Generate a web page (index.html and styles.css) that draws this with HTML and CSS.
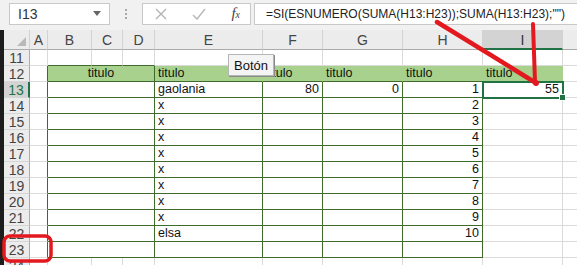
FILE: index.html
```html
<!DOCTYPE html>
<html lang="es">
<head>
<meta charset="UTF-8" />
<title>Hoja de cálculo</title>
<link rel="stylesheet" href="styles.css">
</head>
<body>
<div class="app">
  <div class="fbar">
    <div class="namebox">
      <span>I13</span>
      <svg class="dd" width="8" height="5" viewBox="0 0 8 5"><path d="M0 0h8L4 5z" fill="#666"/></svg>
    </div>
    <div class="grip"><i></i><i></i><i></i></div>
    <div class="fbtns">
      <svg width="12" height="12" viewBox="0 0 12 12"><path d="M1 1l10 10M11 1L1 11" stroke="#b4b4b4" stroke-width="1.4" fill="none"/></svg>
      <svg width="14" height="12" viewBox="0 0 14 12"><path d="M1 7l4 4 8-10" stroke="#bdbdbd" stroke-width="1.6" fill="none"/></svg>
      <span class="fx">f<small>x</small></span>
    </div>
    <div class="formula">=SI(ESNUMERO(SUMA(H13:H23));SUMA(H13:H23);"")</div>
  </div>

  <div class="sheet">
    <div class="grid">
      <!-- column headers -->
      <div class="ch corner"><svg width="9" height="9" viewBox="0 0 9 9"><path d="M9 0v9H0z" fill="#b9b9b9"/></svg></div>
      <div class="ch">A</div>
      <div class="ch">B</div>
      <div class="ch">C</div>
      <div class="ch">D</div>
      <div class="ch">E</div>
      <div class="ch">F</div>
      <div class="ch">G</div>
      <div class="ch">H</div>
      <div class="ch on">I</div>
      <div class="ch"></div>

      <!-- 11 -->
      <div class="rh">11</div>
      <div class="c"></div>
      <div class="c tb"></div><div class="c tb"></div><div class="c tb"></div>
      <div class="c"></div><div class="c"></div><div class="c"></div><div class="c"></div><div class="c"></div>
      <div class="c"></div>

      <!-- 12 -->
      <div class="rh">12</div>
      <div class="c tr"></div>
      <div class="c hd box mid span3">titulo</div>
      <div class="c hd">titulo</div>
      <div class="c hd">titulo</div>
      <div class="c hd">titulo</div>
      <div class="c hd">titulo</div>
      <div class="c hd last">titulo</div>
      <div class="c"></div>

      <!-- 13 -->
      <div class="rh on">13</div>
      <div class="c tr"></div>
      <div class="c t span3"></div>
      <div class="c t">gaolania</div>
      <div class="c t num">80</div>
      <div class="c t num">0</div>
      <div class="c t num">1</div>
      <div class="c num">55</div>
      <div class="c"></div>

      <!-- 14-21 -->
      <div class="rh">14</div><div class="c tr"></div><div class="c t span3"></div><div class="c t">x</div><div class="c t"></div><div class="c t"></div><div class="c t num">2</div><div class="c"></div><div class="c"></div>
      <div class="rh">15</div><div class="c tr"></div><div class="c t span3"></div><div class="c t">x</div><div class="c t"></div><div class="c t"></div><div class="c t num">3</div><div class="c"></div><div class="c"></div>
      <div class="rh">16</div><div class="c tr"></div><div class="c t span3"></div><div class="c t">x</div><div class="c t"></div><div class="c t"></div><div class="c t num">4</div><div class="c"></div><div class="c"></div>
      <div class="rh">17</div><div class="c tr"></div><div class="c t span3"></div><div class="c t">x</div><div class="c t"></div><div class="c t"></div><div class="c t num">5</div><div class="c"></div><div class="c"></div>
      <div class="rh">18</div><div class="c tr"></div><div class="c t span3"></div><div class="c t">x</div><div class="c t"></div><div class="c t"></div><div class="c t num">6</div><div class="c"></div><div class="c"></div>
      <div class="rh">19</div><div class="c tr"></div><div class="c t span3"></div><div class="c t">x</div><div class="c t"></div><div class="c t"></div><div class="c t num">7</div><div class="c"></div><div class="c"></div>
      <div class="rh">20</div><div class="c tr"></div><div class="c t span3"></div><div class="c t">x</div><div class="c t"></div><div class="c t"></div><div class="c t num">8</div><div class="c"></div><div class="c"></div>
      <div class="rh">21</div><div class="c tr"></div><div class="c t span3"></div><div class="c t">x</div><div class="c t"></div><div class="c t"></div><div class="c t num">9</div><div class="c"></div><div class="c"></div>
      <!-- 22 -->
      <div class="rh">22</div><div class="c tr"></div><div class="c t span3"></div><div class="c t">elsa</div><div class="c t"></div><div class="c t"></div><div class="c t num">10</div><div class="c"></div><div class="c"></div>
      <!-- 23 -->
      <div class="rh">23</div><div class="c tr"></div><div class="c t span3"></div><div class="c t"></div><div class="c t"></div><div class="c t"></div><div class="c t"></div><div class="c"></div><div class="c"></div>
      <!-- 24 -->
      <div class="rh">24</div><div class="c"></div><div class="c"></div><div class="c"></div><div class="c"></div><div class="c"></div><div class="c"></div><div class="c"></div><div class="c"></div><div class="c"></div><div class="c"></div>
    </div>

    <button class="btn">Botón</button>
    <div class="sel"><span class="handle"></span></div>
  </div>

  <svg class="marks" width="577" height="265" viewBox="0 0 577 265">
    <g stroke="#e3191f" fill="none" stroke-linecap="round">
      <path d="M437 22L536 83" stroke-width="4.5"/>
      <path d="M533 24L535 82" stroke-width="4"/>
      <rect x="4" y="236" width="47" height="25" rx="6" stroke-width="3.5"/>
    </g>
    <circle cx="536" cy="83" r="3" fill="#e3191f"/>
  </svg>
</div>
</body>
</html>
```

FILE: styles.css
```css
html, body {
  margin: 0;
  padding: 0;
  overflow: hidden;
}
body {
  font-family: "Liberation Sans", Arial, sans-serif;
  background: #fff;
  width: 577px;
  height: 265px;
}
.app {
  position: relative;
  width: 577px;
  height: 265px;
  overflow: hidden;
}

/* formula bar */
.fbar {
  display: flex;
  align-items: center;
  height: 30px;
  padding: 0 0 3px 9px;
  box-sizing: border-box;
  background: #f1f1f1;
}
.namebox, .fbtns, .formula {
  flex-shrink: 0;
  height: 22px;
  box-sizing: border-box;
  background: #fff;
  border: 1px solid #c9c9c9;
  display: flex;
  align-items: center;
}
.namebox {
  width: 101px;
  padding: 0 8px 0 8px;
  justify-content: space-between;
  font-size: 14px;
  color: #333;
}
.grip {
  flex-shrink: 0;
  width: 32px;
  display: flex;
  flex-direction: column;
  align-items: center;
  gap: 2px;
}
.grip i {
  width: 2px;
  height: 2px;
  background: #a8a8a8;
}
.fbtns {
  width: 109px;
  padding: 0 10px 0 12px;
  justify-content: space-between;
}
.fx {
  font-family: "Liberation Serif", serif;
  font-style: italic;
  font-size: 15px;
  color: #444;
}
.fx small {
  font-size: 10px;
}
.formula {
  flex: 1 1 0;
  min-width: 0;
  overflow: hidden;
  margin-left: 3px;
  padding-left: 11px;
  border-right: none;
  font-size: 12px;
  color: #222;
  white-space: nowrap;
}

/* sheet */
.sheet {
  position: relative;
  border-left: 4px solid #1d1d1d;
}
.grid {
  display: grid;
  grid-template-columns: 26px 18px 44px 31px 32px 108px 60px 80px 80px 80px 20px;
  grid-template-rows: 20px;
  grid-auto-rows: 16px;
}
.grid > div {
  box-sizing: border-box;
  overflow: hidden;
  white-space: nowrap;
}
.ch {
  background: #ececec;
  border-right: 1px solid #d2d2d2;
  border-bottom: 1px solid #ababab;
  font-size: 14px;
  color: #444;
  text-align: center;
  line-height: 20px;
}
.ch.corner {
  display: flex;
  align-items: flex-end;
  justify-content: flex-end;
  padding: 0 3px 3px 0;
}
.ch.on {
  background: #d3d3d3;
  color: #333;
  border-bottom: 2px solid #217346;
}
.rh {
  background: #ececec;
  border-right: 1px solid #ababab;
  border-bottom: 1px solid #d6d6d6;
  font-size: 14px;
  color: #444;
  text-align: center;
  line-height: 16px;
}
.rh.on {
  background: #d3d3d3;
  color: #217346;
  border-right: 2px solid #217346;
}
.c {
  border-right: 1px solid #dadada;
  border-bottom: 1px solid #dadada;
  font-size: 12.5px;
  line-height: 15px;
  padding: 0 3px;
  color: #111;
}
.span3 {
  grid-column: span 3;
}
.num {
  text-align: right;
}
.mid {
  text-align: center;
}
.tb {
  border-bottom-color: #3e6a2b;
}
.tr {
  border-right-color: #3e6a2b;
}
.t {
  border-right-color: #3e6a2b;
  border-bottom-color: #3e6a2b;
}
.hd {
  background: #a9d18e;
  border-right-color: #a9d18e;
  border-bottom-color: #3e6a2b;
}
.hd.box {
  border-right-color: #3e6a2b;
}
.hd.last {
  border-bottom-color: #a9d18e;
}

/* floating bits */
.btn {
  position: absolute;
  left: 224px;
  top: 24px;
  width: 46px;
  height: 22px;
  padding: 0;
  background: #f4f4f4;
  border: 1px solid #b5b5b5;
  box-shadow: 1px 1px 0 #8a8a8a;
  font-family: "Liberation Sans", Arial, sans-serif;
  font-size: 13px;
  color: #111;
}
.sel {
  position: absolute;
  left: 478px;
  top: 51px;
  width: 82px;
  height: 18px;
  box-sizing: border-box;
  border: 2px solid #217346;
}
.handle {
  position: absolute;
  right: -4px;
  bottom: -4px;
  width: 5px;
  height: 5px;
  background: #217346;
  border: 1px solid #fff;
}
.marks {
  position: absolute;
  left: 0;
  top: 0;
  pointer-events: none;
}
```
